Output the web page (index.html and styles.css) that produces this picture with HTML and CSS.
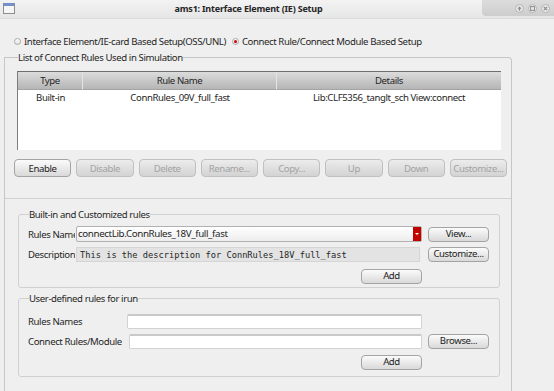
FILE: index.html
```html
<!DOCTYPE html>
<html lang="en">
<head>
    <meta charset="UTF-8">
    <title>ams1: Interface Element (IE) Setup</title>
    <link rel="stylesheet" href="styles.css">
</head>
<body>

<div class="titlebar">
    <div class="app-icon"></div>
    <div class="title">ams1: Interface Element (IE) Setup</div>
    <div class="win-buttons">
        <svg width="9" height="9" viewBox="0 0 9 9"><circle cx="4.5" cy="4.5" r="4" fill="#e9e9e9" stroke="#b5b5b5"/><path d="M4.5 2.3 L6.6 4.8 H5.2 V6.8 H3.8 V4.8 H2.4 Z" fill="#8c8c8c"/></svg>
        <svg width="9" height="9" viewBox="0 0 9 9"><circle cx="4.5" cy="4.5" r="4" fill="#e9e9e9" stroke="#b5b5b5"/><rect x="2.6" y="2.6" width="3.8" height="3.8" fill="none" stroke="#8c8c8c"/></svg>
        <svg width="9" height="9" viewBox="0 0 9 9"><circle cx="4.5" cy="4.5" r="4" fill="#e9e9e9" stroke="#b5b5b5"/><path d="M2.8 2.8 L6.2 6.2 M6.2 2.8 L2.8 6.2" stroke="#8c8c8c" stroke-width="1.2"/></svg>
    </div>
</div>

<div class="radios">
    <label class="radio"><span class="dot"></span>Interface Element/IE-card Based Setup(OSS/UNL)</label>
    <label class="radio"><span class="dot checked"></span>Connect Rule/Connect Module Based Setup</label>
</div>

<fieldset class="group list-group">
    <legend>List of Connect Rules Used in Simulation</legend>
    <div class="rules-table">
        <div class="th">Type</div>
        <div class="th">Rule Name</div>
        <div class="th last">Details</div>
        <div class="td">Built-in</div>
        <div class="td">ConnRules_09V_full_fast</div>
        <div class="td">Lib:CLF5356_tanglt_sch View:connect</div>
    </div>
    <div class="actions">
        <button class="btn">Enable</button>
        <button class="btn" disabled>Disable</button>
        <button class="btn" disabled>Delete</button>
        <button class="btn" disabled>Rename...</button>
        <button class="btn" disabled>Copy...</button>
        <button class="btn" disabled>Up</button>
        <button class="btn" disabled>Down</button>
        <button class="btn" disabled>Customize...</button>
    </div>
</fieldset>

<div class="lower">
    <fieldset class="group sub-group builtin">
        <legend>Built-in and Customized rules</legend>
        <div class="row">
            <span class="label short">Rules Names</span>
            <div class="combo">
                <span class="combo-text">connectLib.ConnRules_18V_full_fast</span>
                <span class="combo-arrow"></span>
            </div>
            <button class="btn side">View...</button>
        </div>
        <div class="row">
            <span class="label short">Description</span>
            <div class="desc">This is the description for ConnRules_18V_full_fast</div>
            <button class="btn side">Customize...</button>
        </div>
        <div class="row add-row">
            <button class="btn side">Add</button>
        </div>
    </fieldset>

    <fieldset class="group sub-group user">
        <legend>User-defined rules for irun</legend>
        <div class="row">
            <span class="label names">Rules Names</span>
            <div class="field"></div>
            <span class="spacer"></span>
        </div>
        <div class="row">
            <span class="label module">Connect Rules/Module</span>
            <div class="field"></div>
            <button class="btn side">Browse...</button>
        </div>
        <div class="row add-row">
            <button class="btn side">Add</button>
        </div>
    </fieldset>
</div>

</body>
</html>
```

FILE: styles.css
```css
* {
    margin: 0;
    padding: 0;
    box-sizing: border-box;
}

body {
    width: 554px;
    height: 391px;
    overflow: hidden;
    background: #efefef;
    color: #262626;
    font-family: "Noto Sans", sans-serif;
    font-size: 9.6px;
    letter-spacing: -0.4px;
}

/* window title bar */
.titlebar {
    height: 19px;
    display: flex;
    align-items: flex-start;
    background: linear-gradient(#f3f3f3, #e6e6e6);
    border-bottom: 1px solid #dadada;
}

.app-icon {
    width: 12px;
    height: 11px;
    margin: 3px 0 0 3px;
    background: #f6f6f6;
    border: 1px solid #8d8d8d;
    border-top: 3px solid #7490c6;
}

.title {
    flex: 1;
    text-align: center;
    font-weight: bold;
    font-size: 9px;
    line-height: 18px;
    letter-spacing: -0.2px;
}

.win-buttons {
    width: 72px;
    height: 16px;
    display: flex;
    align-items: center;
    justify-content: flex-end;
    gap: 4px;
    padding-right: 4px;
    background: linear-gradient(#dcdcdc, #cdcdcd);
    border-radius: 0 0 0 4px;
}

/* radio row */
.radios {
    height: 32px;
    padding: 13px 0 0 14px;
    display: flex;
    gap: 6px;
    line-height: 16px;
}

.radio {
    display: flex;
    align-items: center;
    gap: 3px;
}

.dot {
    width: 7px;
    height: 7px;
    border-radius: 50%;
    border: 1px solid #a9a9a9;
    background: linear-gradient(#ffffff, #e0e0e0);
    display: flex;
    align-items: center;
    justify-content: center;
}

.dot.checked::after {
    content: "";
    width: 3px;
    height: 3px;
    border-radius: 50%;
    background: #d00000;
}

/* group boxes */
.group {
    border: 1px solid #c6c6c6;
}

.group legend {
    padding: 0;
    line-height: 13px;
}

.list-group {
    width: 508px;
    margin-left: 4px;
    padding: 7px 10px 21px 12px;
    border-radius: 0 4px 0 0;
    border-bottom-color: #d0d0d0;
}

.list-group legend {
    margin-left: 1px;
}

.rules-table {
    height: 79px;
    display: grid;
    grid-template-columns: 65px 194px 1fr;
    grid-template-rows: 18px 16px;
    align-content: start;
    background: #ffffff;
    border-left: 1px solid #7d7d7d;
    border-top: 1px solid #6e6e6e;
}

.th {
    text-align: center;
    line-height: 17px;
    background: linear-gradient(#dcdcdc, #b5b5b5);
    border-right: 1px solid #e4e4e4;
    border-bottom: 1px solid #a4a4a4;
}

.th.last {
    border-right: none;
}

.td {
    text-align: center;
    line-height: 16px;
}

.actions {
    display: flex;
    gap: 5px;
    margin: 9px -6px 0 -3px;
}

.actions .btn {
    flex: 1;
}

.btn {
    height: 18px;
    font-family: inherit;
    font-size: 9.6px;
    letter-spacing: -0.4px;
    color: #222;
    background: linear-gradient(#fbfbfb, #d9d9d9);
    border: 1px solid #a4a4a4;
    border-radius: 4px;
    white-space: nowrap;
    overflow: hidden;
}

.btn:disabled {
    color: #a3a3a3;
    background: linear-gradient(#ececec, #d3d3d3);
    border-color: #c0c0c0;
}

/* lower part of the scroll frame */
.lower {
    width: 508px;
    height: 200px;
    margin-left: 4px;
    padding: 9px 0 0 13px;
    border-left: 1px solid #c6c6c6;
    border-right: 1px solid #c6c6c6;
}

.sub-group {
    width: 482px;
    border-radius: 3px;
    border-color: #d0d0d0;
}

.sub-group legend {
    margin-left: 1px;
}

.builtin {
    padding: 5px 10px 3px 9px;
}

.user {
    margin-top: 4px;
    padding: 8px 10px 6px 9px;
}

.row {
    display: flex;
    align-items: center;
    gap: 6px;
    height: 16px;
    margin-bottom: 4px;
}

.builtin .row:nth-child(3),
.user .row:nth-child(3) {
    margin-bottom: 6px;
}

.user .row:nth-child(3) {
    margin-bottom: 5px;
}

.row.add-row {
    justify-content: flex-end;
    padding-right: 67px;
    margin-bottom: 0;
}

.label {
    white-space: nowrap;
    overflow: hidden;
}

.label.short {
    width: 47px;
    flex: none;
    margin-right: -5px;
}

.label.names {
    width: 93px;
    flex: none;
}

.label.module {
    width: 95px;
    flex: none;
}

.btn.side {
    width: 61px;
    height: 15px;
    flex: none;
    line-height: 12px;
}

.combo {
    flex: 1;
    height: 16px;
    display: flex;
    background: linear-gradient(#ffffff, #ededed);
    border: 1px solid #b1b1b1;
    border-radius: 2px;
}

.combo-text {
    flex: 1;
    padding-left: 1px;
    line-height: 14px;
    font-size: 9.8px;
}

.combo-arrow {
    width: 8px;
    background: #c20000;
    display: flex;
    align-items: center;
    justify-content: center;
}

.combo-arrow::after {
    content: "";
    border-left: 2px solid transparent;
    border-right: 2px solid transparent;
    border-top: 2px solid #ffffff;
}

.desc {
    flex: 1;
    height: 15px;
    margin-right: 2px;
    padding-left: 3px;
    line-height: 14px;
    background: #e3e3e3;
    border: 1px solid #d5d5d5;
    font-family: "DejaVu Sans Mono", monospace;
    font-size: 8.7px;
    letter-spacing: 0;
    white-space: nowrap;
    overflow: hidden;
}

.field {
    flex: 1;
    height: 15px;
    background: #ffffff;
    border: 1px solid #d2d2d2;
    border-top: 2px solid #c9c9c9;
    border-radius: 2px;
}

.spacer {
    width: 61px;
    flex: none;
}
```
